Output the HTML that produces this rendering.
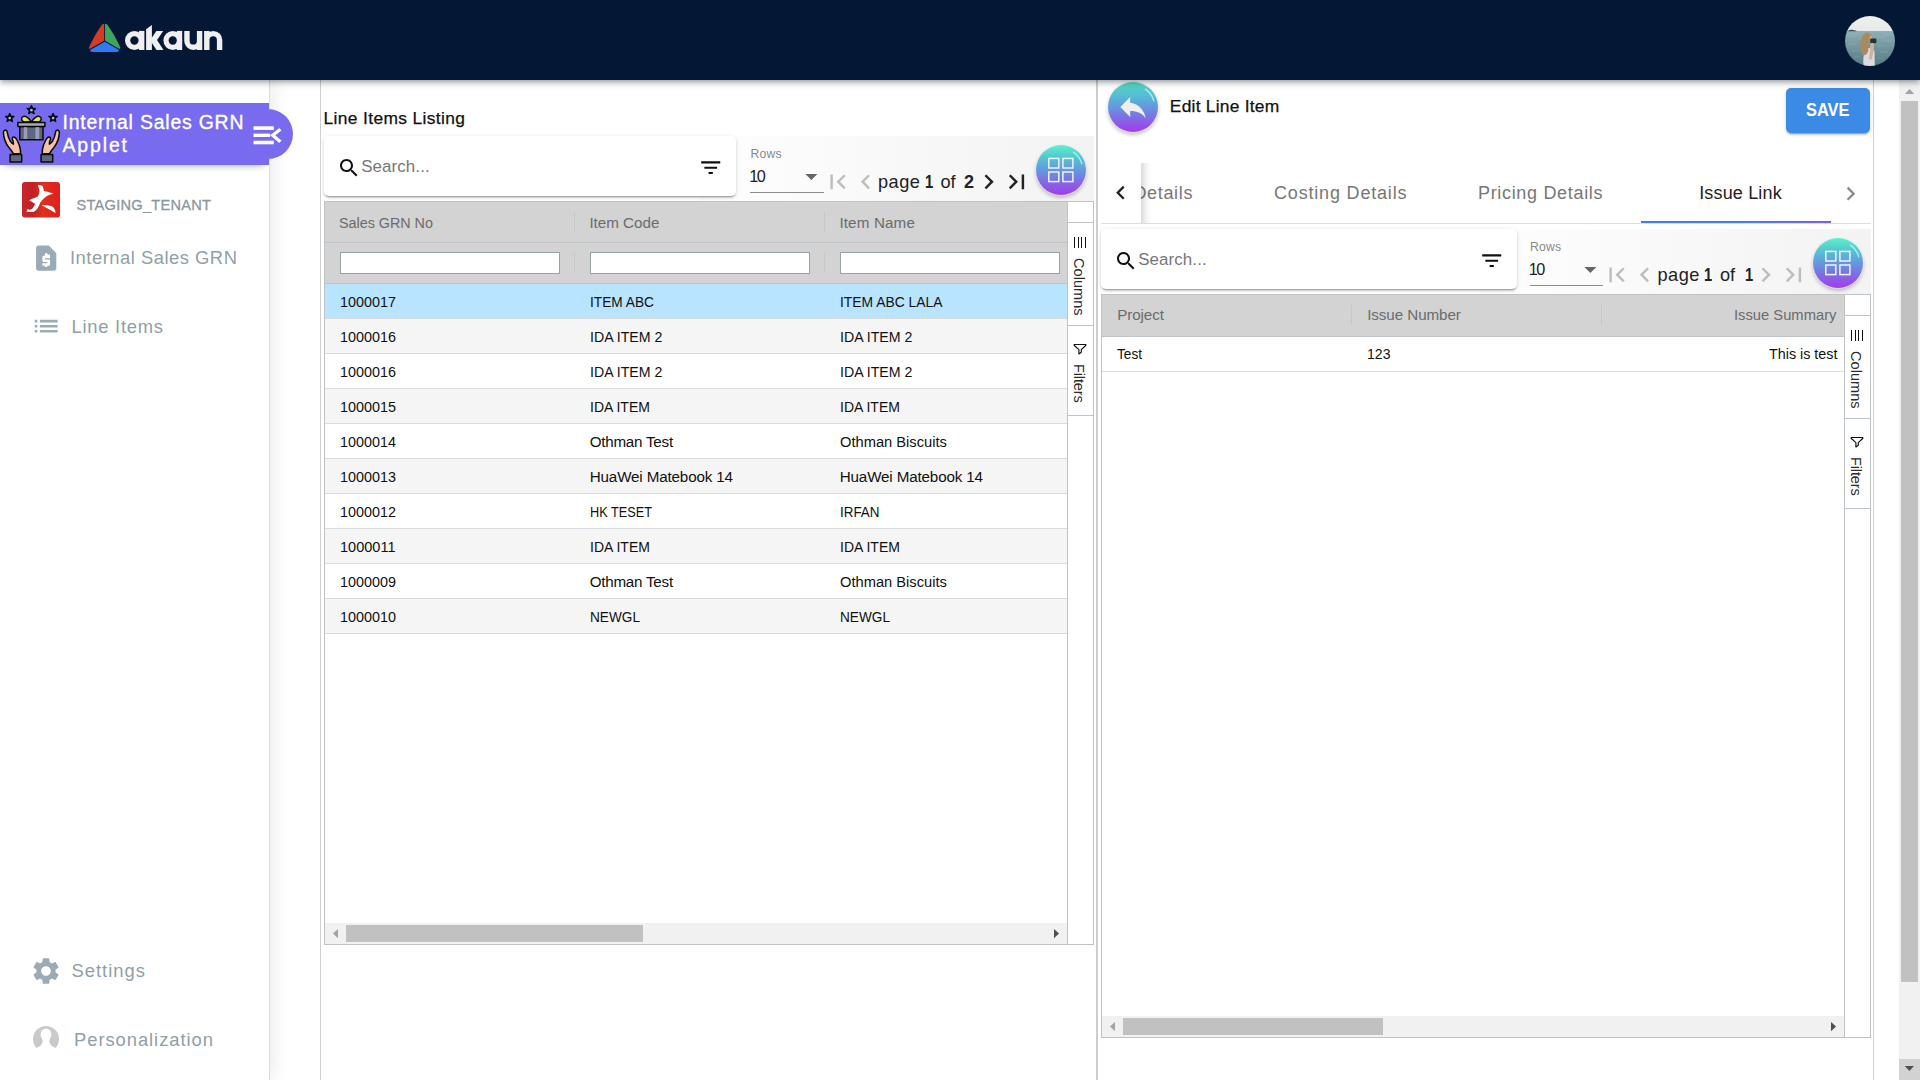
<!DOCTYPE html>
<html>
<head>
<meta charset="utf-8">
<title>akaun</title>
<style>
*{box-sizing:border-box;margin:0;padding:0}
html,body{width:1920px;height:1080px;overflow:hidden;background:#fff;font-family:"Liberation Sans",sans-serif;color:#1a1a1a}
.abs{position:absolute}
.t{position:absolute;white-space:nowrap;line-height:1}
svg{position:absolute;display:block;overflow:visible}
#hdr{left:0;top:0;width:1920px;height:80px;background:#041836;z-index:20;box-shadow:0 2px 4px -1px rgba(0,0,0,.2),0 4px 5px 0 rgba(0,0,0,.14),0 1px 10px 0 rgba(0,0,0,.12)}
#side{left:0;top:80px;width:269px;height:1000px;background:#fff;z-index:5;box-shadow:4px 0 18px rgba(0,0,0,.085)}
#sideline{left:269px;top:80px;width:1px;height:1000px;background:#dcdcdc;z-index:6}
#gapline{left:320px;top:80px;width:1px;height:1000px;background:#cfcfcf;z-index:4}
#banner{left:0;top:103px;width:269px;height:62px;background:#796bf0;z-index:8;box-shadow:0 6px 7px -6px rgba(20,30,40,.42);clip-path:inset(0 0 -14px 0)}
#bump{left:243px;top:109px;width:50px;height:50px;border-radius:50%;background:#796bf0;z-index:7}
.z9{z-index:9}
.grid{position:absolute;border:1px solid #bdc3c7;background:#fff;overflow:hidden}
.ghead{position:absolute;left:0;top:0;background:#d3d3d3;border-bottom:1px solid #bdc3c7}
.hsep{position:absolute;width:1px;background:#c3c8cb}
.row{position:absolute;left:0;height:35px;border-bottom:1px solid #d9dcde;background:#fff}
.row.odd{background:#f5f5f5}
.row.sel{background:#b9e4ff}
.ff{position:absolute;height:22px;background:#fff;border:1px solid #95a5a6}
.sbar{position:absolute;background:#fff;border-left:1px solid #bdc3c7}
.sbtn{position:absolute;left:0;width:100%;border-top:1px solid #bdc3c7;border-bottom:1px solid #bdc3c7}
.vtxt{position:absolute;white-space:nowrap;transform-origin:0 0;transform:rotate(90deg);line-height:1;color:#2b2b2b}
.hscroll{position:absolute;left:0;height:21px;background:#f1f1f1}
.thumb{position:absolute;background:#c1c1c1}
.card{position:absolute;background:#fff;border-radius:5px;box-shadow:0 3px 1px -2px rgba(0,0,0,.2),0 2px 2px 0 rgba(0,0,0,.14),0 1px 5px 0 rgba(0,0,0,.12)}
.tbg{position:absolute;background:linear-gradient(90deg,#fdfdfd 8%,#f3f3f3 100%)}
.fab{position:absolute;width:50px;height:50px;border-radius:50%;background:linear-gradient(180deg,#55dcc0 0%,#57b8d6 30%,#6a8ee0 55%,#8a5ee6 80%,#a33ce8 100%);box-shadow:0 0 0 1px rgba(255,235,250,.55),0 3px 5px -1px rgba(0,0,0,.2),0 2px 4px rgba(0,0,0,.14)}
.fab.g{background:linear-gradient(180deg,#5ef2d0 0%,#56dccb 12%,#57b8d6 32%,#6a8ee0 56%,#8a5ee6 80%,#a33ce8 100%)}

</style>
</head>
<body>
<div id="hdr" class="abs">
<svg width="260" height="80" viewBox="0 0 260 80" style="left:0;top:0">
 <path d="M104.2 23.9L104.2 40.8L89.7 49Q88.5 48.5 89.1 47Q95.8 33 101.7 25Q103 23.600 104.2 23.900Z" fill="#d23b24"/>
 <path d="M105.05 23.9L105.05 40.8L119.55 49Q120.75 48.5 120.15 47Q113.45 33 107.55 25Q106.25 23.600 105.05 23.900Z" fill="#3ea55d"/>
 <path d="M104.62 41.8L118.7 49.7Q119.700 50.600 118.500 51.600Q117.700 52 116.600 52L92.600 52Q91.500 52 90.700 51.600Q89.500 50.600 90.500 49.700Z" fill="#2f7af3"/>
 <g fill="none" stroke="#efefef">
  <circle cx="134.4" cy="40.5" r="6.8" stroke-width="5.2"/>
  <circle cx="172.8" cy="40.5" r="6.8" stroke-width="5.2"/>
  <g stroke-width="5.4">
  <path d="M141.7 30.9V50"/>
  <path d="M179.5 30.9V50"/>
  <path d="M186.95 30.9V40.98A6.325 6.325 0 0 0 199.6 40.98V30.9M199.6 38V50"/>
  <path d="M206.8 30.9V50M206.8 40A6.4 6.4 0 0 1 219.6 40V50"/>
  </g>
  <path d="M149 29.6V50" stroke-width="5.8"/>
 </g>
 <g fill="#efefef">
  <polygon points="146.1,29.2 151.9,24.9 151.9,30 146.1,30"/>
  <polygon points="150.5,39.8 156.3,30.9 163.2,30.9 155.2,42.8"/>
  <polygon points="150.5,40.8 155.4,37.600 163.5,50 156.5,50"/>
 </g>
</svg>
<svg width="52" height="52" viewBox="0 0 52 52" style="left:1844px;top:14.6px">
 <defs>
  <clipPath id="avc"><circle cx="26" cy="26" r="25"/></clipPath>
  <linearGradient id="sea" x1="0" y1="0" x2="0" y2="1"><stop offset="0" stop-color="#8fb0b6"/><stop offset=".5" stop-color="#6f949b"/><stop offset="1" stop-color="#4f7a82"/></linearGradient>
  <linearGradient id="sky" x1="0" y1="0" x2="0" y2="1"><stop offset="0" stop-color="#f3f1ed"/><stop offset="1" stop-color="#e3e9ea"/></linearGradient>
 </defs>
 <g clip-path="url(#avc)">
  <rect x="0" y="0" width="52" height="17" fill="url(#sky)"/>
  <rect x="0" y="16" width="52" height="36" fill="url(#sea)"/>
  <g stroke="#a9c3c8" stroke-width=".5" opacity=".55">
   <path d="M3 21h7M14 24h6M33 22h8M40 26h7M5 29h8M34 31h9M8 36h7M36 37h8M10 42h6M33 43h7M38 19h8M4 18.500h9"/>
  </g>
  <path d="M3.5 16.3C5 15.2 7 14.700 9 14.900C11 15.100 12.500 15.700 13.500 16.300Z" fill="#3a4f58"/>
  <path d="M19.500 51C18.800 45 19.500 38.500 21.500 34L27 32.500L30.500 36L30.800 51Z" fill="#dcdadf"/>
  <path d="M22.300 17.700C24.500 17.200 26.600 18.300 27.200 20.500C27.600 22.500 26.800 24.500 25.800 26.500C24.600 29 24.200 31.500 24.300 34.500C24.300 37.500 22.500 40 19.800 40.500C17 38 16 33.500 16.300 29C16.500 24 18.500 19 22.300 17.700Z" fill="#a98a60"/>
  <path d="M25.800 20.500C27.200 20.800 27.900 21.600 28 22.800L27.700 26.300L25.800 26.800Z" fill="#c9a88c"/>
  <rect x="26.200" y="23.400" width="6.200" height="4.800" rx="1" fill="#2b3035"/>
  <path d="M26.500 28.500C27.800 27.900 29.200 28 30 28.600L29.600 37L27.300 45L25 44C25.800 39 26.200 33 26.500 28.500Z" fill="#cdb39d"/>
 </g>
</svg>
</div>
<div id="side" class="abs"></div>
<div id="sideline" class="abs"></div>
<div id="gapline" class="abs"></div>
<div id="bump" class="abs"></div>
<div id="banner" class="abs"></div>
<svg width="80" height="70" viewBox="0 0 80 70" style="left:0;top:100px;z-index:9">
 <polygon points="31.40,5.10 32.75,8.14 36.06,8.49 33.59,10.71 34.28,13.96 31.40,12.30 28.52,13.96 29.21,10.71 26.74,8.49 30.05,8.14" fill="#0a0a0a" stroke="#0a0a0a" stroke-width="1" stroke-linejoin="round"/><circle cx="31.4" cy="10.2" r="1.35" fill="#7fc8ea"/><polygon points="9.70,13.00 11.05,16.04 14.36,16.39 11.89,18.61 12.58,21.86 9.70,20.20 6.82,21.86 7.51,18.61 5.04,16.39 8.35,16.04" fill="#0a0a0a" stroke="#0a0a0a" stroke-width="1" stroke-linejoin="round"/><circle cx="9.7" cy="18.099999999999998" r="1.35" fill="#7fc8ea"/><polygon points="53.10,13.00 54.45,16.04 57.76,16.39 55.29,18.61 55.98,21.86 53.10,20.20 50.22,21.86 50.91,18.61 48.44,16.39 51.75,16.04" fill="#0a0a0a" stroke="#0a0a0a" stroke-width="1" stroke-linejoin="round"/><circle cx="53.1" cy="18.099999999999998" r="1.35" fill="#7fc8ea"/>
 <g stroke="#0a0a0a" stroke-width="1.5" stroke-linejoin="round">
  <path d="M31.2 21.6C28.5 18 25.5 15.6 23 16.600C20.600 17.600 21.400 21 24 22Z" fill="#e3e64a"/>
  <path d="M31.6 21.6C34.300 18 37.300 15.6 39.800 16.600C42.200 17.600 41.400 21 38.800 22Z" fill="#e3e64a"/>
  <rect x="19.8" y="26.4" width="23.2" height="13.4" fill="#5d6781"/>
  <rect x="17.9" y="22.4" width="27" height="4" fill="#a9abbf"/>
 </g>
 <rect x="23.8" y="27.2" width="3.4" height="11.8" fill="#9a9db4"/>
 <rect x="35.4" y="27.2" width="3.8" height="11.8" fill="#9a9db4"/>
 <g stroke="#0a0a0a" stroke-width="1.5" stroke-linejoin="round">
  <path d="M4.3 30.6C5.2 29.8 6.6 30 7 31.2C7.6 35 8.6 38.6 10.4 41.4C11.2 42.6 12.2 43.6 13.4 44.2C13.6 42.4 13 40.6 12.4 39.2C12 38 12.6 37 13.8 37C15 37 16 38 17 40C18.6 43 20 46.400 20.400 49.6L20.600 53.8H13.400C12.6 51.6 10.8 49.8 9 47.6C5.400 43.2 3.600 37.600 3.400 32.4C3.400 31.600 3.700 31 4.300 30.600Z" fill="#f4c2a4"/>
  <path d="M4.3 30.6C5.2 29.8 6.6 30 7 31.2C7.6 35 8.6 38.6 10.4 41.4C11.2 42.6 12.2 43.6 13.4 44.2C13.6 42.4 13 40.6 12.4 39.2C12 38 12.6 37 13.8 37C15 37 16 38 17 40C18.6 43 20 46.400 20.400 49.6L20.600 53.8H13.400C12.6 51.6 10.8 49.8 9 47.6C5.400 43.2 3.600 37.600 3.400 32.4C3.400 31.600 3.700 31 4.300 30.600Z" fill="#f4c2a4" transform="translate(62.8 0) scale(-1 1)"/>
  <rect x="10.1" y="54.4" width="11.6" height="7.600" fill="#5d6781"/>
  <rect x="41.1" y="54.4" width="11.6" height="7.600" fill="#5d6781"/>
 </g>
</svg>
<div class="t" style="top:112.88px;font-size:19.4px;color:#fff;left:62.50px;letter-spacing:0.816px;z-index:9;-webkit-text-stroke:.35px #fff;">Internal Sales GRN</div>
<div class="t" style="top:135.58px;font-size:19.4px;color:#fff;left:62.50px;letter-spacing:1.898px;z-index:9;-webkit-text-stroke:.35px #fff;">Applet</div>
<svg width="40" height="30" viewBox="250 120 40 30" style="left:250px;top:120px;z-index:9"><g fill="#fff"><rect x="253.5" y="126.3" width="20.3" height="3.6"/><rect x="253.5" y="133.6" width="16.6" height="3.4"/><rect x="253.5" y="140.7" width="20.3" height="3.6"/></g><path d="M280.4 129.2L272.700 135.300L280.400 141.800" fill="none" stroke="#fff" stroke-width="3.3"/></svg>
<svg width="38" height="35.5" viewBox="0 0 38 35.5" style="left:22px;top:181.6px;z-index:9">
 <defs><linearGradient id="rg" x1="0" y1="0" x2="1" y2="0"><stop offset="0" stop-color="#c8262d"/><stop offset=".3" stop-color="#c41f25"/><stop offset=".55" stop-color="#e0301c"/><stop offset="1" stop-color="#e21c1e"/></linearGradient></defs>
 <rect x="0" y="0" width="38" height="35.5" rx="3" fill="url(#rg)"/>
 <path d="M15.8 3.1C18 2.9 20.4 3.5 20.8 4.4L21.9 8.9C25 9.5 29 10.5 31.9 11.7C28.2 12.3 25.2 13.4 23.6 15C21 17 19.2 19 18.2 20.8C17.6 22.4 16.8 24.6 15.8 26.100C14.5 28 13 29.5 11.4 30L4.4 29.700L5.800 26.700L7.500 28L10.300 26.700C11.500 25 12.500 23.500 13 21.700C11 20.500 9 19.300 7.200 18.300L10.300 16.700C12 16 14 15.300 15.800 14.400C17 12.500 17.500 10.500 17.500 8.300C17 6.500 16.300 4.800 15.800 3.100Z" fill="#fff"/><path d="M19.4 23.200C21.500 22.700 25 22.900 30.300 24.400C32.500 26 33.500 28.500 33.600 31.100C31 29.500 29 28.200 26.900 27.200C24 25.500 21.400 24.200 19.400 23.200Z" fill="#fff"/>
</svg>
<div class="t" style="top:197.64px;font-size:14.6px;color:#8b969c;left:76.50px;letter-spacing:0.258px;z-index:9;-webkit-text-stroke:.3px #8b969c;">STAGING_TENANT</div>
<svg width="30.4" height="30.4" viewBox="0 0 24 24" style="left:31.1px;top:242.9px;z-index:9"><path d="M14 2H6c-1.1 0-1.99.9-1.99 2L4 20c0 1.1.89 2 1.99 2H18c1.1 0 2-.9 2-2V8l-6-6zm1 10h-4v1h3c.55 0 1 .45 1 1v3c0 .55-.45 1-1 1h-1v1h-2v-1H9v-2h4v-1h-3c-.55 0-1-.45-1-1v-3c0-.55.45-1 1-1h1V8h2v1h2v2z" fill="#9aabb7"/></svg>
<div class="t" style="top:248.72px;font-size:18.4px;color:#909fa8;left:70.00px;letter-spacing:0.499px;z-index:9;">Internal Sales GRN</div>
<svg width="30.4" height="30.4" viewBox="0 0 24 24" style="left:31.2px;top:310.7px;z-index:9"><path d="M3 13h2v-2H3v2zm0 4h2v-2H3v2zm0-8h2V7H3v2zm4 4h14v-2H7v2zm0 4h14v-2H7v2zM7 7v2h14V7H7z" fill="#9aabb7"/></svg>
<div class="t" style="top:317.62px;font-size:18.4px;color:#909fa8;left:71.50px;letter-spacing:0.735px;z-index:9;">Line Items</div>
<svg width="32" height="32" viewBox="0 0 24 24" style="left:30.3px;top:954.9px;z-index:9"><path d="M19.14 12.94c.04-.3.06-.61.06-.94 0-.32-.02-.64-.07-.94l2.03-1.58c.18-.14.23-.41.12-.61l-1.92-3.32c-.12-.22-.37-.29-.59-.22l-2.39.96c-.5-.38-1.03-.7-1.62-.94l-.36-2.54c-.04-.24-.24-.41-.48-.41h-3.84c-.24 0-.43.17-.47.41l-.36 2.54c-.59.24-1.13.57-1.62.94l-2.39-.96c-.22-.08-.47 0-.59.22L2.74 8.87c-.12.21-.08.47.12.61l2.03 1.58c-.05.3-.09.63-.09.94s.02.64.07.94l-2.03 1.58c-.18.14-.23.41-.12.61l1.92 3.32c.12.22.37.29.59.22l2.39-.96c.5.38 1.03.7 1.62.94l.36 2.54c.05.24.24.41.48.41h3.84c.24 0 .44-.17.47-.41l.36-2.54c.59-.24 1.13-.56 1.62-.94l2.39.96c.22.08.47 0 .59-.22l1.92-3.32c.12-.22.07-.47-.12-.61l-2.01-1.58zM12 15.6c-1.98 0-3.6-1.62-3.6-3.6s1.62-3.6 3.6-3.6 3.6 1.62 3.6 3.6-1.62 3.6-3.6 3.6z" fill="#9aabb7"/></svg>
<div class="t" style="top:961.62px;font-size:18.4px;color:#909fa8;left:71.50px;letter-spacing:1.002px;z-index:9;">Settings</div>
<svg width="28" height="22.8" viewBox="0 0 28 22.8" style="left:32px;top:1025px;z-index:9;overflow:hidden">
 <defs><clipPath id="pc"><circle cx="14" cy="14" r="13"/></clipPath></defs>
 <g clip-path="url(#pc)">
  <rect x="0" y="0" width="28" height="28" fill="#c9c9c9"/>
  <ellipse cx="14" cy="9.7" rx="5.4" ry="6.2" fill="#fff"/>
  <path d="M10.3 14C10.500 16 11 17 10 18.500C9 21 6 22 4 23.400L0 28H28L24 23.400C22 22 19 21 18 18.500C17 17 17.500 16 17.700 14Z" fill="#fff"/>
 </g>
</svg>
<div class="t" style="top:1031.12px;font-size:18.4px;color:#909fa8;left:74.00px;letter-spacing:0.942px;z-index:9;">Personalization</div>

<div class="abs" style="left:321px;top:80px;width:775px;height:1000px;background:#fff;z-index:1"></div>
<div class="abs" style="left:0;top:0;z-index:2">
<div class="t" style="top:109.87px;font-size:17.4px;color:#111;left:323.50px;letter-spacing:0.359px;-webkit-text-stroke:.25px #111;">Line Items Listing</div>
<div class="tbg" style="left:700px;top:136px;width:394px;height:65px"></div>
<div class="card" style="left:324px;top:136px;width:412px;height:60px"></div><svg width="24.0" height="24.0" viewBox="0 0 24 24" style="left:336.5px;top:155.9px"><path d="M15.5 14h-.79l-.28-.27C15.41 12.59 16 11.11 16 9.5 16 5.91 13.09 3 9.5 3S3 5.91 3 9.5 5.91 16 9.5 16c1.61 0 3.09-.59 4.23-1.57l.27.28v.79l5 4.99L20.49 19l-4.99-5zm-6 0C7.01 14 5 11.99 5 9.5S7.01 5 9.5 5 14 7.01 14 9.5 11.99 14 9.5 14z" fill="#111"/></svg><div class="t" style="top:158.59px;font-size:16.9px;color:#777;left:361.20px;letter-spacing:0.108px;">Search...</div><svg width="25.44" height="25.44" viewBox="0 0 24 24" style="left:698.32px;top:154.54px"><path d="M10 18h4v-2h-4v2zM3 6v2h18V6H3zm3 7h12v-2H6v2z" fill="#111"/></svg>
<div class="t" style="top:147.67px;font-size:12.2px;color:#8a8a8a;left:750.50px;letter-spacing:0.231px;">Rows</div><div class="t" style="top:168.29px;font-size:16.2px;color:#222;left:749.30px;letter-spacing:-1.6px;">10</div><svg width="28.799999999999997" height="28.799999999999997" viewBox="0 0 24 24" style="left:796.6px;top:161.6px"><path d="M7 10l5 5 5-5z" fill="#666"/></svg><div class="abs" style="left:750.0px;top:192px;width:73.5px;height:1px;background:#8c8c8c"></div><svg width="29.52" height="29.52" viewBox="0 0 24 24" style="left:822.62px;top:167.22px"><path d="M18.41 16.59L13.82 12l4.59-4.59L17 6l-6 6 6 6zM6 6h2v12H6z" fill="#bdbdbd"/></svg><svg width="29.52" height="29.52" viewBox="0 0 24 24" style="left:850.66px;top:167.22px"><path d="M15.41 7.41L14 6l-6 6 6 6 1.41-1.41L10.83 12z" fill="#bdbdbd"/></svg><div class="t" style="top:173.49px;font-size:18.2px;color:#222;left:878.00px;letter-spacing:0.504px;">page</div><div class="t" style="top:173.32px;font-size:18.4px;color:#222;left:924.60px;font-weight:700;transform:scaleX(.8);transform-origin:0 0;">1</div><div class="t" style="top:173.49px;font-size:18.2px;color:#222;left:940.50px;letter-spacing:-0.179px;">of</div><div class="t" style="top:173.32px;font-size:18.4px;color:#222;left:964.00px;font-weight:700;transform:scaleX(.98);transform-origin:0 0;">2</div><svg width="29.52" height="29.52" viewBox="0 0 24 24" style="left:974.4343px;top:167.22px"><path d="M10 6L8.59 7.41 13.17 12l-4.58 4.59L10 18l6-6z" fill="#222"/></svg><svg width="29.52" height="29.52" viewBox="0 0 24 24" style="left:1001.8743px;top:167.22px"><path d="M5.59 7.41L10.18 12l-4.59 4.59L7 18l6-6-6-6zM16 6h2v12h-2z" fill="#222"/></svg>
<div class="fab g" style="left:1036px;top:145px"><svg width="50" height="50" viewBox="0 0 50 50" style="left:0;top:0"><path d="M37.4 7.2A21.7 21.7 0 0 1 45.8 18.7" fill="none" stroke="rgba(170,248,255,.85)" stroke-width="1.4" stroke-linecap="round"/></svg><svg width="50" height="50" viewBox="0 0 50 50" style="left:0;top:0"><g fill="none" stroke="#f1f1f1" stroke-width="1.5"><rect x="12.8" y="13.4" width="10" height="9.6"/><rect x="26.900" y="13.4" width="10" height="9.6"/><rect x="12.8" y="27" width="10" height="9.6"/><rect x="26.900" y="27" width="10" height="9.6"/></g></svg></div>
<div class="grid" style="left:324px;top:201px;width:770px;height:744px"><div class="ghead" style="width:742px;height:82px"></div><div class="abs" style="left:0;top:40px;width:742px;height:1px;background:#bdc3c7"></div><div class="hsep" style="left:249px;top:10px;height:20px"></div><div class="hsep" style="left:249px;top:51px;height:20px"></div><div class="hsep" style="left:499px;top:10px;height:20px"></div><div class="hsep" style="left:499px;top:51px;height:20px"></div><div class="t" style="top:12.73px;font-size:15.2px;color:#6b6b6b;left:14.40px;transform:scaleX(0.9430);transform-origin:0 0;">Sales GRN No</div><div class="ff" style="left:15px;top:50px;width:220px"></div><div class="t" style="top:12.73px;font-size:15.2px;color:#6b6b6b;left:264.40px;letter-spacing:-0.015px;">Item Code</div><div class="ff" style="left:265px;top:50px;width:220px"></div><div class="t" style="top:12.73px;font-size:15.2px;color:#6b6b6b;left:514.40px;letter-spacing:0.146px;">Item Name</div><div class="ff" style="left:515px;top:50px;width:220px"></div><div class="row sel" style="top:82px;width:742px"></div><div class="t" style="top:91.83px;font-size:15.2px;color:#111;left:15.30px;transform:scaleX(0.9463);transform-origin:0 0;">1000017</div><div class="t" style="top:91.83px;font-size:15.2px;color:#111;left:264.70px;transform:scaleX(0.9021);transform-origin:0 0;">ITEM ABC</div><div class="t" style="top:91.83px;font-size:15.2px;color:#111;left:514.70px;transform:scaleX(0.9123);transform-origin:0 0;">ITEM ABC LALA</div><div class="row odd" style="top:117px;width:742px"></div><div class="t" style="top:126.83px;font-size:15.2px;color:#111;left:15.30px;transform:scaleX(0.9463);transform-origin:0 0;">1000016</div><div class="t" style="top:126.83px;font-size:15.2px;color:#111;left:264.70px;transform:scaleX(0.9330);transform-origin:0 0;">IDA ITEM 2</div><div class="t" style="top:126.83px;font-size:15.2px;color:#111;left:514.70px;transform:scaleX(0.9330);transform-origin:0 0;">IDA ITEM 2</div><div class="row" style="top:152px;width:742px"></div><div class="t" style="top:161.83px;font-size:15.2px;color:#111;left:15.30px;transform:scaleX(0.9463);transform-origin:0 0;">1000016</div><div class="t" style="top:161.83px;font-size:15.2px;color:#111;left:264.70px;transform:scaleX(0.9330);transform-origin:0 0;">IDA ITEM 2</div><div class="t" style="top:161.83px;font-size:15.2px;color:#111;left:514.70px;transform:scaleX(0.9330);transform-origin:0 0;">IDA ITEM 2</div><div class="row odd" style="top:187px;width:742px"></div><div class="t" style="top:196.83px;font-size:15.2px;color:#111;left:15.30px;transform:scaleX(0.9463);transform-origin:0 0;">1000015</div><div class="t" style="top:196.83px;font-size:15.2px;color:#111;left:264.70px;transform:scaleX(0.9226);transform-origin:0 0;">IDA ITEM</div><div class="t" style="top:196.83px;font-size:15.2px;color:#111;left:514.70px;transform:scaleX(0.9226);transform-origin:0 0;">IDA ITEM</div><div class="row" style="top:222px;width:742px"></div><div class="t" style="top:231.83px;font-size:15.2px;color:#111;left:15.30px;transform:scaleX(0.9463);transform-origin:0 0;">1000014</div><div class="t" style="top:231.83px;font-size:15.2px;color:#111;left:264.70px;letter-spacing:-0.239px;">Othman Test</div><div class="t" style="top:231.83px;font-size:15.2px;color:#111;left:514.70px;transform:scaleX(0.9669);transform-origin:0 0;">Othman Biscuits</div><div class="row odd" style="top:257px;width:742px"></div><div class="t" style="top:266.83px;font-size:15.2px;color:#111;left:15.30px;transform:scaleX(0.9463);transform-origin:0 0;">1000013</div><div class="t" style="top:266.83px;font-size:15.2px;color:#111;left:264.70px;letter-spacing:-0.141px;">HuaWei Matebook 14</div><div class="t" style="top:266.83px;font-size:15.2px;color:#111;left:514.70px;letter-spacing:-0.141px;">HuaWei Matebook 14</div><div class="row" style="top:292px;width:742px"></div><div class="t" style="top:301.83px;font-size:15.2px;color:#111;left:15.30px;transform:scaleX(0.9463);transform-origin:0 0;">1000012</div><div class="t" style="top:301.83px;font-size:15.2px;color:#111;left:264.70px;transform:scaleX(0.8373);transform-origin:0 0;">HK TESET</div><div class="t" style="top:301.83px;font-size:15.2px;color:#111;left:514.70px;transform:scaleX(0.8824);transform-origin:0 0;">IRFAN</div><div class="row odd" style="top:327px;width:742px"></div><div class="t" style="top:336.83px;font-size:15.2px;color:#111;left:15.30px;transform:scaleX(0.9561);transform-origin:0 0;">1000011</div><div class="t" style="top:336.83px;font-size:15.2px;color:#111;left:264.70px;transform:scaleX(0.9226);transform-origin:0 0;">IDA ITEM</div><div class="t" style="top:336.83px;font-size:15.2px;color:#111;left:514.70px;transform:scaleX(0.9226);transform-origin:0 0;">IDA ITEM</div><div class="row" style="top:362px;width:742px"></div><div class="t" style="top:371.83px;font-size:15.2px;color:#111;left:15.30px;transform:scaleX(0.9463);transform-origin:0 0;">1000009</div><div class="t" style="top:371.83px;font-size:15.2px;color:#111;left:264.70px;letter-spacing:-0.239px;">Othman Test</div><div class="t" style="top:371.83px;font-size:15.2px;color:#111;left:514.70px;transform:scaleX(0.9669);transform-origin:0 0;">Othman Biscuits</div><div class="row odd" style="top:397px;width:742px"></div><div class="t" style="top:406.83px;font-size:15.2px;color:#111;left:15.30px;transform:scaleX(0.9463);transform-origin:0 0;">1000010</div><div class="t" style="top:406.83px;font-size:15.2px;color:#111;left:264.70px;transform:scaleX(0.8970);transform-origin:0 0;">NEWGL</div><div class="t" style="top:406.83px;font-size:15.2px;color:#111;left:514.70px;transform:scaleX(0.8970);transform-origin:0 0;">NEWGL</div><div class="hscroll" style="top:721px;width:742px"></div><div class="thumb" style="left:21px;top:723px;width:297px;height:17px"></div><svg width="1" height="1" style="left:0;top:0"><polygon points="13,727 13,736.2 8,731.6" fill="#a3a3a3"/></svg><svg width="1" height="1" style="left:0;top:0"><polygon points="729,727 729,736.2 734,731.6" fill="#505050"/></svg><div class="sbar" style="left:742px;top:0;width:27px;height:742px"><div class="sbtn" style="top:20px;height:104px"></div><div class="sbtn" style="top:123px;height:91px"></div><div class="abs" style="left:5.90px;top:35.3px;width:1.2px;height:10.6px;background:#111"></div><div class="abs" style="left:9.50px;top:35.3px;width:1.2px;height:10.6px;background:#111"></div><div class="abs" style="left:13.10px;top:35.3px;width:1.2px;height:10.6px;background:#111"></div><div class="abs" style="left:16.70px;top:35.3px;width:1.2px;height:10.6px;background:#111"></div><div class="vtxt" style="left:17.7px;top:55.8px;font-size:14.5px;letter-spacing:0.06px">Columns</div><svg width="24" height="24" viewBox="0 0 24 24" style="left:0px;top:133.2px"><path d="M6.5 9.5H17.500Q18.300 9.700 17.700 10.500L13.300 14.700V17.300L10.900 19V14.700L6.300 10.500Q5.700 9.700 6.500 9.500Z" fill="none" stroke="#111" stroke-width="1.15" stroke-linejoin="round"/></svg><div class="vtxt" style="left:17.7px;top:161.9px;font-size:14.5px;letter-spacing:-0.12px">Filters</div></div></div>
</div>
<div class="abs" style="left:1096px;top:80px;width:2px;height:1000px;background:#cdcdcd;z-index:3"></div>

<div class="abs" style="left:1098px;top:80px;width:775px;height:1000px;background:#fff;z-index:1"></div>
<div class="abs" style="left:0;top:0;z-index:2">
<div class="fab" style="left:1108px;top:82px"><svg width="50" height="50" viewBox="0 0 50 50" style="left:0;top:0"><path d="M37.4 7.2A21.7 21.7 0 0 1 45.8 18.7" fill="none" stroke="rgba(170,248,255,.85)" stroke-width="1.4" stroke-linecap="round"/></svg><svg width="34" height="34" viewBox="0 0 24 24" style="left:8.0px;top:7.6px"><path d="M10 9V5l-7 7 7 7v-4.1c5 0 8.5 1.6 11 5.1-1-5-4-10-11-11z" fill="#efefef"/></svg></div>
<div class="t" style="top:97.87px;font-size:17.4px;color:#111;left:1169.80px;letter-spacing:0.239px;-webkit-text-stroke:.25px #111;">Edit Line Item</div>
<div class="abs" style="left:1786px;top:88px;width:84px;height:45px;border-radius:5px;background:#3a8ae6;box-shadow:0 3px 1px -2px rgba(0,0,0,.2),0 2px 2px 0 rgba(0,0,0,.14),0 1px 5px 0 rgba(0,0,0,.12)"></div>
<div class="t" style="top:101.83px;font-size:17.8px;color:#fff;left:1806.40px;font-weight:700;transform:scaleX(0.9246);transform-origin:0 0;">SAVE</div>
<div class="abs" style="left:1101px;top:223px;width:770px;height:1px;background:#dedede"></div>
<div class="t" style="top:184.36px;font-size:18px;color:#777;left:1133.40px;letter-spacing:0.663px;">Details</div>
<div class="t" style="top:184.36px;font-size:18px;color:#777;left:1274.00px;letter-spacing:0.818px;">Costing Details</div>
<div class="t" style="top:184.36px;font-size:18px;color:#777;left:1478.00px;letter-spacing:0.675px;">Pricing Details</div>
<div class="t" style="top:184.36px;font-size:18px;color:#222;left:1699.20px;letter-spacing:0.162px;">Issue Link</div>
<div class="abs" style="left:1641px;top:221px;width:190px;height:2px;background:linear-gradient(90deg,#3f7fe8,#4a7be9 60%,#7b5cf0)"></div>
<div class="abs" style="left:1101px;top:163px;width:40px;height:60px;background:#fff"></div><div class="abs" style="left:1141px;top:163px;width:11px;height:60px;background:linear-gradient(90deg,rgba(0,0,0,.15),rgba(0,0,0,.07) 35%,rgba(0,0,0,.02) 70%,rgba(0,0,0,0))"></div>
<svg width="27.36" height="27.36" viewBox="0 0 24 24" style="left:1106.8px;top:179.48px"><path d="M15.41 7.41L14 6l-6 6 6 6 1.41-1.41L10.83 12z" fill="#222"/></svg>
<svg width="27.36" height="27.36" viewBox="0 0 24 24" style="left:1837.0215px;top:179.68px"><path d="M10 6L8.59 7.41 13.17 12l-4.58 4.59L10 18l6-6z" fill="#8a8a8a"/></svg>
<div class="tbg" style="left:1480px;top:229px;width:391px;height:65px"></div>
<div class="card" style="left:1101px;top:229px;width:416px;height:60px"></div><svg width="24.0" height="24.0" viewBox="0 0 24 24" style="left:1113.5px;top:248.9px"><path d="M15.5 14h-.79l-.28-.27C15.41 12.59 16 11.11 16 9.5 16 5.91 13.09 3 9.5 3S3 5.91 3 9.5 5.91 16 9.5 16c1.61 0 3.09-.59 4.23-1.57l.27.28v.79l5 4.99L20.49 19l-4.99-5zm-6 0C7.01 14 5 11.99 5 9.5S7.01 5 9.5 5 14 7.01 14 9.5 11.99 14 9.5 14z" fill="#111"/></svg><div class="t" style="top:251.59px;font-size:16.9px;color:#777;left:1138.20px;letter-spacing:0.108px;">Search...</div><svg width="25.44" height="25.44" viewBox="0 0 24 24" style="left:1479.32px;top:247.54px"><path d="M10 18h4v-2h-4v2zM3 6v2h18V6H3zm3 7h12v-2H6v2z" fill="#111"/></svg>
<div class="t" style="top:240.67px;font-size:12.2px;color:#8a8a8a;left:1530.00px;letter-spacing:0.231px;">Rows</div><div class="t" style="top:261.29px;font-size:16.2px;color:#222;left:1528.80px;letter-spacing:-1.6px;">10</div><svg width="28.799999999999997" height="28.799999999999997" viewBox="0 0 24 24" style="left:1576.1px;top:254.60000000000002px"><path d="M7 10l5 5 5-5z" fill="#666"/></svg><div class="abs" style="left:1529.5px;top:285px;width:73.5px;height:1px;background:#8c8c8c"></div><svg width="29.52" height="29.52" viewBox="0 0 24 24" style="left:1602.12px;top:260.22px"><path d="M18.41 16.59L13.82 12l4.59-4.59L17 6l-6 6 6 6zM6 6h2v12H6z" fill="#bdbdbd"/></svg><svg width="29.52" height="29.52" viewBox="0 0 24 24" style="left:1630.16px;top:260.22px"><path d="M15.41 7.41L14 6l-6 6 6 6 1.41-1.41L10.83 12z" fill="#bdbdbd"/></svg><div class="t" style="top:266.49px;font-size:18.2px;color:#222;left:1657.50px;letter-spacing:0.504px;">page</div><div class="t" style="top:266.32px;font-size:18.4px;color:#222;left:1704.10px;font-weight:700;transform:scaleX(.8);transform-origin:0 0;">1</div><div class="t" style="top:266.49px;font-size:18.2px;color:#222;left:1720.00px;letter-spacing:-0.179px;">of</div><div class="t" style="top:266.32px;font-size:18.4px;color:#222;left:1744.70px;font-weight:700;transform:scaleX(.8);transform-origin:0 0;">1</div><svg width="29.52" height="29.52" viewBox="0 0 24 24" style="left:1751.1843px;top:260.22px"><path d="M10 6L8.59 7.41 13.17 12l-4.58 4.59L10 18l6-6z" fill="#bdbdbd"/></svg><svg width="29.52" height="29.52" viewBox="0 0 24 24" style="left:1778.6243px;top:260.22px"><path d="M5.59 7.41L10.18 12l-4.59 4.59L7 18l6-6-6-6zM16 6h2v12h-2z" fill="#bdbdbd"/></svg>
<div class="fab g" style="left:1813px;top:238px"><svg width="50" height="50" viewBox="0 0 50 50" style="left:0;top:0"><path d="M37.4 7.2A21.7 21.7 0 0 1 45.8 18.7" fill="none" stroke="rgba(170,248,255,.85)" stroke-width="1.4" stroke-linecap="round"/></svg><svg width="50" height="50" viewBox="0 0 50 50" style="left:0;top:0"><g fill="none" stroke="#f1f1f1" stroke-width="1.5"><rect x="12.8" y="13.4" width="10" height="9.6"/><rect x="26.900" y="13.4" width="10" height="9.6"/><rect x="12.8" y="27" width="10" height="9.6"/><rect x="26.900" y="27" width="10" height="9.6"/></g></svg></div>
<div class="grid" style="left:1101px;top:294px;width:770px;height:744px"><div class="ghead" style="width:742px;height:42px"></div><div class="hsep" style="left:249px;top:10px;height:20px"></div><div class="hsep" style="left:499px;top:10px;height:20px"></div><div class="t" style="top:12.33px;font-size:15.2px;color:#6b6b6b;left:15.20px;letter-spacing:-0.085px;">Project</div><div class="t" style="top:12.33px;font-size:15.2px;color:#6b6b6b;left:265.20px;letter-spacing:-0.074px;">Issue Number</div><div class="t" style="top:12.33px;font-size:15.2px;color:#6b6b6b;left:632.30px;transform:scaleX(0.9708);transform-origin:0 0;">Issue Summary</div><div class="row" style="top:42px;width:742px"></div><div class="t" style="top:51.33px;font-size:15.2px;color:#111;left:15.00px;transform:scaleX(0.8968);transform-origin:0 0;">Test</div><div class="t" style="top:51.33px;font-size:15.2px;color:#111;left:265.00px;transform:scaleX(0.9266);transform-origin:0 0;">123</div><div class="t" style="top:51.33px;font-size:15.2px;color:#111;left:666.50px;transform:scaleX(0.9430);transform-origin:0 0;">This is test</div><div class="hscroll" style="top:721px;width:742px"></div><div class="thumb" style="left:21px;top:723px;width:260px;height:17px"></div><svg width="1" height="1" style="left:0;top:0"><polygon points="13,727 13,736.2 8,731.6" fill="#a3a3a3"/></svg><svg width="1" height="1" style="left:0;top:0"><polygon points="729,727 729,736.2 734,731.6" fill="#505050"/></svg><div class="sbar" style="left:742px;top:0;width:27px;height:742px"><div class="sbtn" style="top:20px;height:104px"></div><div class="sbtn" style="top:123px;height:91px"></div><div class="abs" style="left:5.90px;top:35.3px;width:1.2px;height:10.6px;background:#111"></div><div class="abs" style="left:9.50px;top:35.3px;width:1.2px;height:10.6px;background:#111"></div><div class="abs" style="left:13.10px;top:35.3px;width:1.2px;height:10.6px;background:#111"></div><div class="abs" style="left:16.70px;top:35.3px;width:1.2px;height:10.6px;background:#111"></div><div class="vtxt" style="left:17.7px;top:55.8px;font-size:14.5px;letter-spacing:0.06px">Columns</div><svg width="24" height="24" viewBox="0 0 24 24" style="left:0px;top:133.2px"><path d="M6.5 9.5H17.500Q18.300 9.700 17.700 10.500L13.300 14.700V17.300L10.900 19V14.700L6.300 10.500Q5.700 9.700 6.500 9.500Z" fill="none" stroke="#111" stroke-width="1.15" stroke-linejoin="round"/></svg><div class="vtxt" style="left:17.7px;top:161.9px;font-size:14.5px;letter-spacing:-0.12px">Filters</div></div></div>
</div>
<div class="abs" style="left:1873px;top:80px;width:1px;height:1000px;background:#cfcfcf;z-index:3"></div>
<div class="abs" style="left:1899px;top:80px;width:21px;height:1000px;background:#f1f1f1;z-index:3">
 <div class="thumb" style="left:2px;top:21px;width:17px;height:881px"></div>
 <div class="abs" style="left:0;top:979px;width:21px;height:21px;background:#d2d2d2"></div>
 <svg width="1" height="1" style="left:0;top:0"><polygon points="6,14 15.2,14 10.6,9" fill="#a3a3a3"/></svg>
 <svg width="1" height="1" style="left:0;top:0"><polygon points="5.8,986 15,986 10.4,991" fill="#505050"/></svg>
</div>

</body>
</html>
